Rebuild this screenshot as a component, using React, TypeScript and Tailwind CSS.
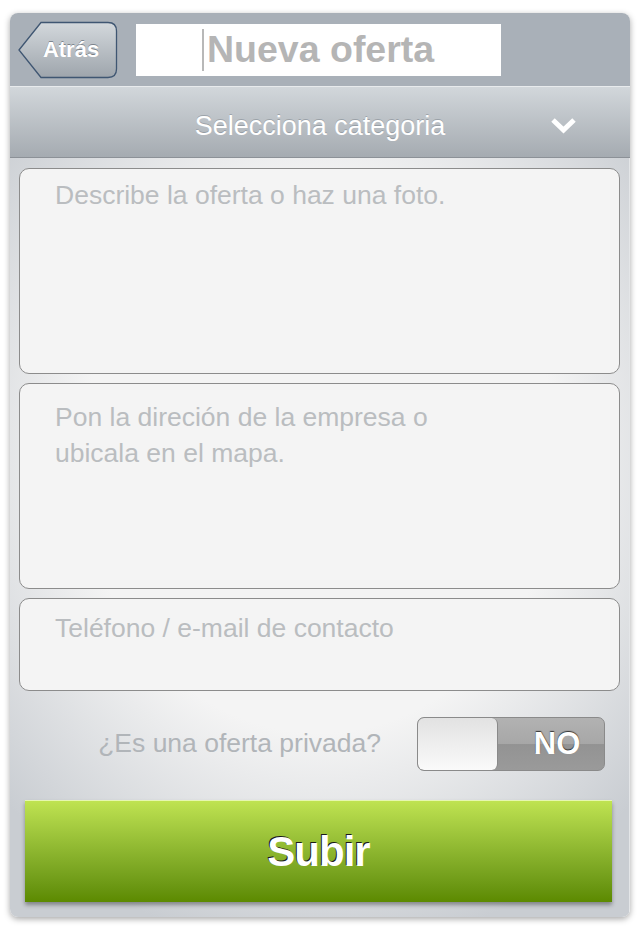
import React from 'react';

const font = { fontFamily: '"Liberation Sans", Arial, sans-serif' };

const BackButton: React.FC = () => (
  <div className="relative w-[100px] h-[58px] flex items-center justify-center">
    <svg className="absolute inset-0" width="100" height="58" viewBox="0 0 100 58">
      <defs>
        <linearGradient id="bb" x1="0" y1="0" x2="0" y2="1">
          <stop offset="0" stopColor="#d3d8dc" />
          <stop offset="1" stopColor="#9ea5ac" />
        </linearGradient>
      </defs>
      <path
        d="M1 29 L23 1.5 H90 Q98.5 1.5 98.5 10 V48 Q98.5 56.5 90 56.5 H23 Z"
        fill="url(#bb)"
        stroke="#3f5672"
        strokeWidth="1.3"
      />
    </svg>
    <span className="relative ml-[6px] text-white text-[22px] font-bold [text-shadow:0_-1px_0_rgba(60,70,80,0.5)]">
      Atrás
    </span>
  </div>
);

const Field: React.FC<{ h: string; pt: string; children: React.ReactNode }> = ({ h, pt, children }) => (
  <div
    className={`${h} ${pt} w-full rounded-[10px] border-[1.5px] border-[#8c8c8c] bg-[#f4f4f4] pl-[35px] text-[26.5px] leading-[36px] text-[#babdc0]`}
  >
    {children}
  </div>
);

const App: React.FC = () => {
  return (
    <div className="w-[640px] h-[928px] bg-white pt-[13px] pl-[10px]" style={font}>
      <div className="w-[620px] h-[904px] rounded-[8px] overflow-hidden flex flex-col shadow-[0_2px_6px_rgba(0,0,0,0.35)]">
        {/* top bar */}
        <div className="h-[73px] bg-[#a9b0b8] flex items-center pl-[8px]">
          <BackButton />
          <div className="ml-[18px] w-[365px] h-[52px] bg-white flex items-center pl-[66px]">
            <div className="w-[2px] h-[42px] bg-[#b8b8b8]" />
            <span className="ml-[3px] text-[37.5px] font-bold text-[#b5b5b5]">Nueva oferta</span>
          </div>
        </div>

        {/* category select */}
        <div className="h-[72px] border-t border-[#e8ebed] border-b border-b-[#8c9197] bg-gradient-to-b from-[#d2d7db] to-[#a5abb1] flex items-center relative">
          <span className="w-full text-center text-white text-[27px] pt-[8px] [text-shadow:0_-1px_0_rgba(90,100,110,0.35)]">
            Selecciona categoria
          </span>
          <svg className="absolute left-[540px] top-[30px]" width="27" height="18" viewBox="0 0 27 18">
            <polyline points="3,3 13.5,13 24,3" fill="none" stroke="#ffffff" strokeWidth="5" />
          </svg>
        </div>

        {/* body */}
        <div className="flex-1 bg-[radial-gradient(ellipse_70%_65%_at_50%_40%,#f4f4f4_55%,#c9cdd2_100%)] px-[9px] pt-[10px] flex flex-col border-r border-[#e4e6e8]">
          <div className="flex flex-col gap-[9px]">
            <Field h="h-[206px]" pt="pt-[8px]">Describe la oferta o haz una foto.</Field>
            <Field h="h-[206px]" pt="pt-[15px]">
              Pon la direción de la empresa o
              <br />
              ubicala en el mapa.
            </Field>
            <Field h="h-[93px]" pt="pt-[11px]">Teléfono / e-mail de contacto</Field>
          </div>

          <div className="mt-[26px] flex items-center justify-end pr-[15px]">
            <span className="text-[26.5px] text-[#b1b5b9] mr-[36px]">¿Es una oferta privada?</span>
            <div className="w-[188px] h-[54px] rounded-[7px] border border-[#8a8a8a] overflow-hidden flex bg-[linear-gradient(to_bottom,#b2b2b2_0%,#a7a7a7_50%,#939393_51%,#9a9a9a_100%)]">
              <div className="w-[80px] h-full rounded-[6px] border-r border-[#8a8a8a] bg-gradient-to-b from-[#e2e2e2] to-[#fafafa]" />
              <div className="flex-1 flex items-center justify-center pl-[12px]">
                <span className="text-white text-[31px] font-bold [text-shadow:0_-1px_1px_rgba(0,0,0,0.7)]">NO</span>
              </div>
            </div>
          </div>

          <div className="mt-[29px] ml-[6px] w-[587px] h-[102px] border-t border-[#e6f7b0] bg-gradient-to-b from-[#bfe351] to-[#5c8a00] flex items-center justify-center shadow-[0_3px_4px_rgba(0,0,0,0.35)]">
            <span className="text-white text-[42px] font-bold tracking-[-1px] [text-shadow:-1px_-1px_0_#1a1a1a]">Subir</span>
          </div>
        </div>
      </div>
    </div>
  );
};

export default App;
